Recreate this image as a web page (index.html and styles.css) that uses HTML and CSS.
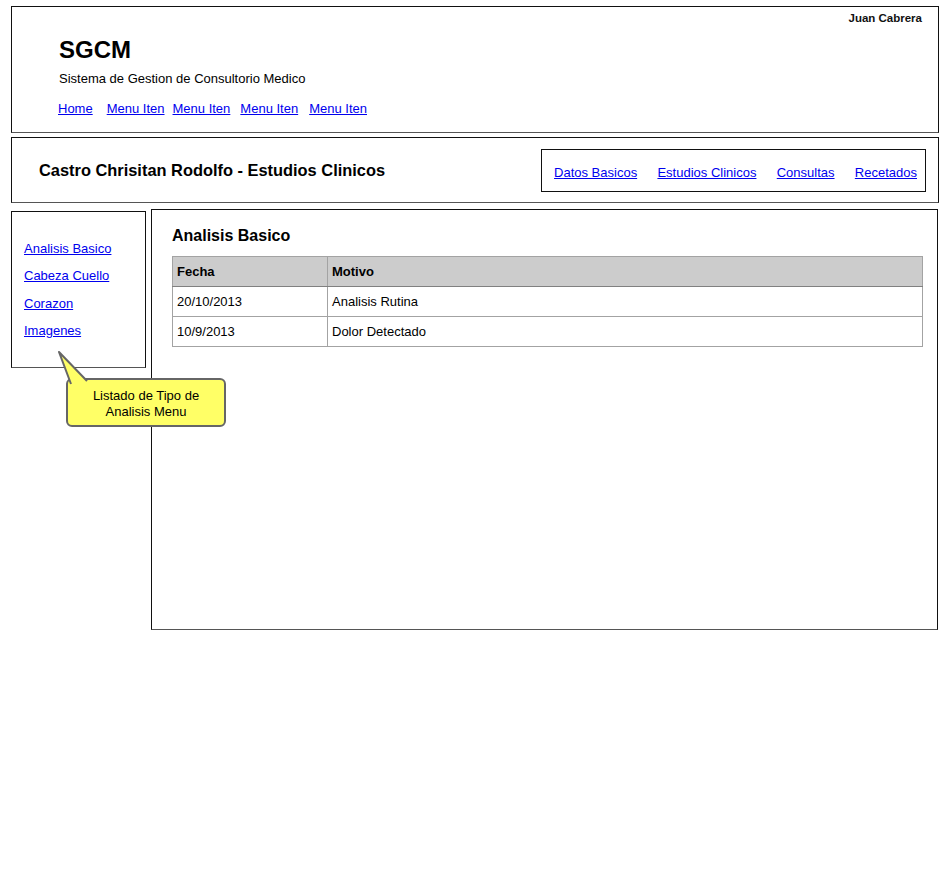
FILE: index.html
```html
<!DOCTYPE html>
<html lang="es">
<head>
<meta charset="utf-8">
<title>SGCM</title>
<link rel="stylesheet" href="styles.css">
</head>
<body>
<div class="page">
  <header class="box header">
    <div class="user">Juan Cabrera</div>
    <h1 class="brand">SGCM</h1>
    <p class="subtitle">Sistema de Gestion de Consultorio Medico</p>
    <nav class="topnav">
      <a href="#" class="nav-home">Home</a>
      <a href="#" class="nav-1">Menu Iten</a>
      <a href="#" class="nav-2">Menu Iten</a>
      <a href="#" class="nav-3">Menu Iten</a>
      <a href="#">Menu Iten</a>
    </nav>
  </header>

  <section class="box patient">
    <h2 class="patient-title">Castro Chrisitan Rodolfo - Estudios Clinicos</h2>
    <nav class="tabs">
      <a href="#">Datos Basicos</a>
      <a href="#">Estudios Clinicos</a>
      <a href="#">Consultas</a>
      <a href="#">Recetados</a>
    </nav>
  </section>

  <div class="content">
    <aside class="box sidebar">
      <a href="#">Analisis Basico</a>
      <a href="#">Cabeza Cuello</a>
      <a href="#">Corazon</a>
      <a href="#">Imagenes</a>
      <div class="callout">
        <svg class="callout-tail" width="40" height="34" viewBox="0 0 40 34">
          <path d="M13 33 L1 1 L29 30" fill="#ffff66" stroke="#666" stroke-width="2" stroke-linejoin="round"/>
        </svg>
        <div class="callout-body">Listado de Tipo de<br>Analisis Menu</div>
      </div>
    </aside>

    <main class="box main">
      <h3 class="main-title">Analisis Basico</h3>
      <table class="grid">
        <thead>
          <tr><th class="col-fecha">Fecha</th><th>Motivo</th></tr>
        </thead>
        <tbody>
          <tr><td>20/10/2013</td><td>Analisis Rutina</td></tr>
          <tr><td>10/9/2013</td><td>Dolor Detectado</td></tr>
        </tbody>
      </table>
    </main>
  </div>
</div>
</body>
</html>
```

FILE: styles.css
```css
html, body {
  margin: 0;
  padding: 0;
  background: #fff;
}
body {
  font-family: "Liberation Sans", Arial, sans-serif;
  color: #000;
}
a {
  color: #0000ee;
  text-decoration: underline;
}
.page {
  width: 928px;
  margin-left: 11px;
  padding-top: 6px;
}
.box {
  box-sizing: border-box;
  border: 1px solid #111;
  border-bottom-color: #555;
  background: #fff;
}

/* header */
.header {
  height: 127px;
  padding: 4px 16px 0 47px;
  display: flex;
  flex-direction: column;
}
.user {
  align-self: flex-end;
  font-size: 11.5px;
  font-weight: bold;
  line-height: 14px;
  color: #111;
}
.brand {
  margin: 11px 0 0 0;
  font-size: 24px;
  font-weight: bold;
  line-height: 28px;
}
.subtitle {
  margin: 7px 0 0 0;
  font-size: 13px;
  line-height: 16px;
}
.topnav {
  margin-top: 14px;
  display: flex;
  font-size: 13px;
  line-height: 16px;
  margin-left: -1px;
}
.topnav a { margin-right: 11px; }
.topnav .nav-home { margin-right: 14px; }
.topnav .nav-1 { margin-right: 8px; }
.topnav .nav-2 { margin-right: 10px; }
.topnav .nav-3 { margin-right: 11px; }

/* patient bar */
.patient {
  margin-top: 4px;
  height: 66px;
  display: flex;
  align-items: center;
  justify-content: space-between;
  padding: 0 12px 0 27px;
}
.patient-title {
  margin: 0;
  font-size: 16.4px;
  font-weight: bold;
  line-height: 20px;
}
.tabs {
  box-sizing: border-box;
  height: 43px;
  margin-top: 1px;
  border: 1px solid #111;
  display: flex;
  align-items: center;
  padding: 3px 8px 0 12px;
  font-size: 13px;
  gap: 20.3px;
}

/* content */
.content {
  display: grid;
  grid-template-columns: 135px 787px;
  column-gap: 5px;
  margin-top: 6px;
  align-items: start;
}
.sidebar {
  position: relative;
  margin-top: 2px;
  height: 157px;
  padding: 29px 0 0 12px;
  display: flex;
  flex-direction: column;
  align-items: flex-start;
  font-size: 13px;
  line-height: 16px;
  gap: 11.3px;
}
.main {
  height: 421px;
  padding: 16px 15px 0 20px;
}
.main-title {
  margin: 0 0 10px 0;
  font-size: 16px;
  font-weight: bold;
  line-height: 20px;
}
.grid {
  width: 751px;
  border-collapse: collapse;
  font-size: 13px;
}
.grid th, .grid td {
  border: 1px solid #a3a3a3;
  height: 30px;
  padding: 0 0 0 4px;
  text-align: left;
  box-sizing: border-box;
}
.grid th {
  background: #cccccc;
  font-weight: bold;
  border-bottom-color: #808080;
}
.grid .col-fecha { width: 155px; }

/* callout */
.callout {
  position: absolute;
  left: 40px;
  top: 139px;
  width: 200px;
  height: 90px;
  pointer-events: none;
}
.callout-tail {
  position: absolute;
  left: 6px;
  top: 0;
  z-index: 2;
}
.callout-body {
  position: absolute;
  left: 14px;
  top: 27px;
  box-sizing: border-box;
  width: 160px;
  height: 49px;
  background: #ffff66;
  border: 2px solid #666;
  border-radius: 6px;
  font-size: 13px;
  line-height: 16px;
  text-align: center;
  padding-top: 8px;
  z-index: 1;
}
```
